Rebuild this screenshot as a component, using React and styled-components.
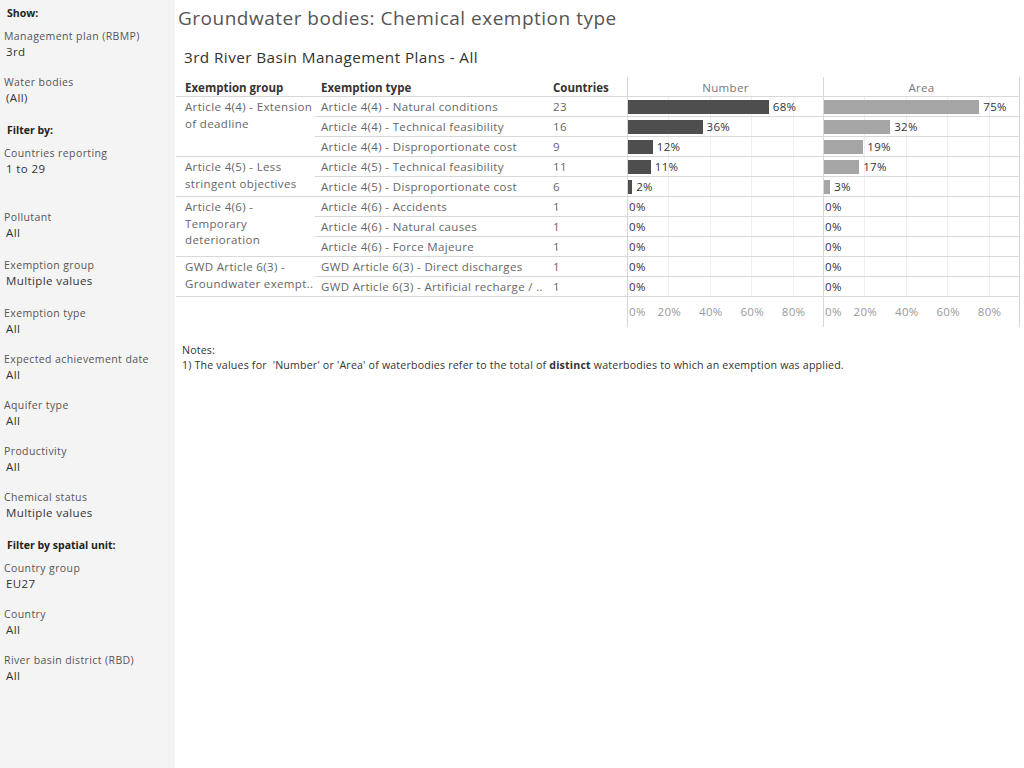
import React from 'react';
import styled, { createGlobalStyle } from 'styled-components';

const GlobalStyle = createGlobalStyle`
  html, body {
    margin: 0;
    padding: 0;
    background: #fff;
  }
  body {
    font-family: "Open Sans", Lato, sans-serif;
    color: #333;
  }
`;

const PX_PER_PCT = 2.07;
const LINE = '#d8d8d8';

const groups = [
  {
    name: ['Article 4(4) - Extension', 'of deadline'],
    rows: [
      { type: 'Article 4(4) - Natural conditions', countries: 23, number: 68, area: 75 },
      { type: 'Article 4(4) - Technical feasibility', countries: 16, number: 36, area: 32 },
      { type: 'Article 4(4) - Disproportionate cost', countries: 9, number: 12, area: 19 },
    ],
  },
  {
    name: ['Article 4(5) - Less', 'stringent objectives'],
    rows: [
      { type: 'Article 4(5) - Technical feasibility', countries: 11, number: 11, area: 17 },
      { type: 'Article 4(5) - Disproportionate cost', countries: 6, number: 2, area: 3 },
    ],
  },
  {
    name: ['Article 4(6) -', 'Temporary', 'deterioration'],
    rows: [
      { type: 'Article 4(6) - Accidents', countries: 1, number: 0, area: 0 },
      { type: 'Article 4(6) - Natural causes', countries: 1, number: 0, area: 0 },
      { type: 'Article 4(6) - Force Majeure', countries: 1, number: 0, area: 0 },
    ],
  },
  {
    name: ['GWD Article 6(3) -', 'Groundwater exempt..'],
    rows: [
      { type: 'GWD Article 6(3) - Direct discharges', countries: 1, number: 0, area: 0 },
      { type: 'GWD Article 6(3) - Artificial recharge / ..', countries: 1, number: 0, area: 0 },
    ],
  },
];

const filters = [
  { heading: 'Show:' },
  { label: 'Management plan (RBMP)', value: '3rd' },
  { label: 'Water bodies', value: '(All)' },
  { heading: 'Filter by:' },
  { label: 'Countries reporting', value: '1 to 29', size: 64 },
  { label: 'Pollutant', value: 'All', size: 48 },
  { label: 'Exemption group', value: 'Multiple values', size: 48 },
  { label: 'Exemption type', value: 'All' },
  { label: 'Expected achievement date', value: 'All' },
  { label: 'Aquifer type', value: 'All' },
  { label: 'Productivity', value: 'All' },
  { label: 'Chemical status', value: 'Multiple values' },
  { heading: 'Filter by spatial unit:' },
  { label: 'Country group', value: 'EU27' },
  { label: 'Country', value: 'All' },
  { label: 'River basin district (RBD)', value: 'All' },
];

const Page = styled.div`
  display: flex;
  width: 1024px;
  height: 768px;
  overflow: hidden;
`;

const Sidebar = styled.aside`
  width: 175px;
  flex-shrink: 0;
  background: #f4f4f4;
  padding-top: 5px;
  box-sizing: border-box;
`;

const Heading = styled.div`
  font-size: 10.5px;
  font-weight: 700;
  color: #222;
  line-height: 16px;
  padding-left: 7px;
  margin: 2px 0 7px;
  &:first-child {
    margin-top: 0;
  }
`;

const Filter = styled.div`
  height: ${(p) => p.$size || 46}px;
  padding-left: 4px;
`;

const FilterLabel = styled.div`
  font-size: 10.5px;
  letter-spacing: 0.4px;
  line-height: 16px;
  color: #555;
`;

const FilterValue = styled.div`
  font-size: 11.5px;
  letter-spacing: 0.4px;
  line-height: 16px;
  color: #333;
  padding-left: 2px;
`;

const Main = styled.main`
  flex: 1;
  padding-top: 6px;
`;

const Title = styled.h1`
  margin: 0 0 0 3px;
  font-size: 19px;
  letter-spacing: 0.5px;
  font-weight: 400;
  line-height: 24px;
  color: #555;
`;

const Subtitle = styled.h2`
  margin: 17px 0 0 9px;
  font-size: 15.3px;
  letter-spacing: 0.42px;
  font-weight: 400;
  line-height: 20px;
  color: #333;
`;

const Table = styled.div`
  margin: 10px 0 0 1px;
  width: 844px;
`;

const COLS = '139px 235px 77px 196px 196px';

const HeaderRow = styled.div`
  display: grid;
  grid-template-columns: ${COLS};
  height: 20px;
  box-sizing: border-box;
  border-bottom: 1px solid ${LINE};
  border-right: 1px solid ${LINE};
`;

const HeadCell = styled.div`
  font-size: 11.5px;
  font-weight: 700;
  color: #333;
  line-height: 20px;
  padding-top: 1px;
  padding-left: ${(p) => p.$pad}px;
  box-sizing: border-box;
  white-space: nowrap;
`;

const PaneHead = styled.div`
  font-size: 11.5px;
  letter-spacing: 0.3px;
  color: #777;
  text-align: center;
  line-height: 20px;
  padding-top: 1px;
  border-left: 1px solid ${LINE};
`;

const Group = styled.div`
  display: grid;
  grid-template-columns: 139px 1fr;
`;

const GroupName = styled.div`
  font-size: 11.5px;
  letter-spacing: 0.35px;
  line-height: 16.7px;
  color: #666;
  padding: 2px 0 0 9px;
  white-space: nowrap;
  border-bottom: 1px solid ${LINE};
`;

const Row = styled.div`
  display: grid;
  grid-template-columns: 235px 77px 196px 196px;
  height: 20px;
  box-sizing: border-box;
  border-bottom: 1px solid ${LINE};
  border-right: 1px solid ${LINE};
`;

const TextCell = styled.div`
  font-size: 11.5px;
  letter-spacing: 0.35px;
  line-height: 20px;
  color: #666;
  padding-left: ${(p) => p.$pad}px;
  white-space: nowrap;
  overflow: hidden;
`;

const ChartCell = styled.div`
  display: flex;
  align-items: center;
  border-left: 1px solid ${LINE};
  background-image: repeating-linear-gradient(
    to right,
    transparent 0,
    transparent 40.4px,
    #efefef 40.4px,
    #efefef 41.4px
  );
`;

const Bar = styled.div`
  height: 14px;
  background: ${(p) => p.$color};
  flex-shrink: 0;
`;

const BarLabel = styled.span`
  font-size: 11.5px;
  letter-spacing: 0.3px;
  color: #333;
  margin-left: ${(p) => (p.$zero ? 1 : 4)}px;
`;

const AxisRow = styled.div`
  display: grid;
  grid-template-columns: ${COLS};
  height: 30px;
  border-right: 1px solid ${LINE};
`;

const Axis = styled.div`
  position: relative;
  border-left: 1px solid ${LINE};
`;

const Tick = styled.span`
  position: absolute;
  top: 7px;
  font-size: 11.5px;
  letter-spacing: 0.3px;
  color: #999;
  transform: translateX(${(p) => (p.$first ? '1px' : '-50%')});
`;

const Notes = styled.div`
  margin: 16px 0 0 7px;
  font-size: 10.6px;
  letter-spacing: 0.2px;
  line-height: 15px;
  color: #333;
  b {
    font-weight: 700;
  }
`;

const BarCell = ({ pct, color }) => (
  <ChartCell>
    {pct > 0 && <Bar $color={color} style={{ width: pct * PX_PER_PCT }} />}
    <BarLabel $zero={pct === 0}>{pct}%</BarLabel>
  </ChartCell>
);

const AxisPane = () => (
  <Axis>
    {[0, 20, 40, 60, 80].map((t) => (
      <Tick key={t} $first={t === 0} style={{ left: t * PX_PER_PCT }}>
        {t}%
      </Tick>
    ))}
  </Axis>
);

export default function App() {
  return (
    <Page>
      <GlobalStyle />
      <Sidebar>
        {filters.map((f, i) =>
          f.heading ? (
            <Heading key={i}>{f.heading}</Heading>
          ) : (
            <Filter key={i} $size={f.size}>
              <FilterLabel>{f.label}</FilterLabel>
              <FilterValue>{f.value}</FilterValue>
            </Filter>
          )
        )}
      </Sidebar>
      <Main>
        <Title>Groundwater bodies: Chemical exemption type</Title>
        <Subtitle>3rd River Basin Management Plans - All</Subtitle>
        <Table>
          <HeaderRow>
            <HeadCell $pad={9}>Exemption group</HeadCell>
            <HeadCell $pad={6}>Exemption type</HeadCell>
            <HeadCell $pad={3}>Countries</HeadCell>
            <PaneHead>Number</PaneHead>
            <PaneHead>Area</PaneHead>
          </HeaderRow>
          {groups.map((g) => (
            <Group key={g.name[0]}>
              <GroupName>
                {g.name.map((line) => (
                  <div key={line}>{line}</div>
                ))}
              </GroupName>
              <div>
                {g.rows.map((r) => (
                  <Row key={r.type}>
                    <TextCell $pad={6}>{r.type}</TextCell>
                    <TextCell $pad={3}>{r.countries}</TextCell>
                    <BarCell pct={r.number} color="#4e4e4e" />
                    <BarCell pct={r.area} color="#a5a5a5" />
                  </Row>
                ))}
              </div>
            </Group>
          ))}
          <AxisRow>
            <div />
            <div />
            <div />
            <AxisPane />
            <AxisPane />
          </AxisRow>
        </Table>
        <Notes>
          Notes:
          <br />
          1) The values for &nbsp;'Number' or 'Area' of waterbodies refer to the total of <b>distinct</b> waterbodies to which an exemption was applied.
        </Notes>
      </Main>
    </Page>
  );
}
